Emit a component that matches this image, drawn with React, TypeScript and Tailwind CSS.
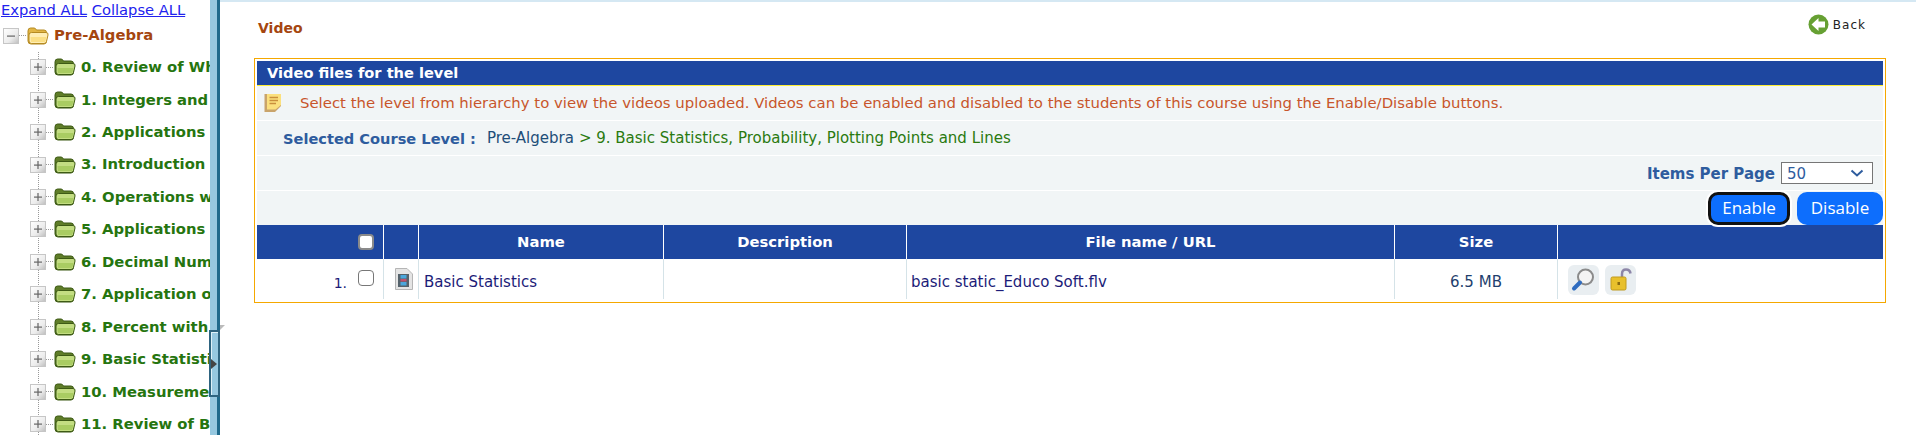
const font = "font-['DejaVu_Sans',Verdana,sans-serif]";

const levels = [
  "0. Review of Whole Numbers",
  "1. Integers and Introduction",
  "2. Applications of Integers",
  "3. Introduction to Fractions",
  "4. Operations with Fractions",
  "5. Applications of Fractions",
  "6. Decimal Numbers and More",
  "7. Application of Decimals",
  "8. Percent with Applications",
  "9. Basic Statistics, Probability",
  "10. Measurement and Geometry",
  "11. Review of Basic Algebra",
];

function BoxIcon({ minus }: { minus?: boolean }) {
  return (
    <svg width="16" height="16" viewBox="0 0 16 16" className="shrink-0">
      <defs>
        <linearGradient id="bx" x1="0" y1="0" x2="1" y2="1">
          <stop offset="0" stopColor="#ffffff" />
          <stop offset="0.6" stopColor="#ececec" />
          <stop offset="1" stopColor="#bdbdbd" />
        </linearGradient>
      </defs>
      <rect x="0.5" y="0.5" width="15" height="15" fill="url(#bx)" stroke="#c6c6c6" />
      <rect x="4" y="7.5" width="8" height="1.2" fill="#666" />
      {!minus && <rect x="7.4" y="4" width="1.2" height="8" fill="#666" />}
    </svg>
  );
}

function Folder({ open }: { open?: boolean }) {
  const back = open ? "#e2b645" : "#5f7d28";
  const fill = open ? "#fbdf85" : "#a9cc62";
  const front = open ? "#ffeeb4" : "#c3dd82";
  const edge = open ? "#b58a22" : "#3d5a14";
  return (
    <svg width="22" height="18" viewBox="0 0 22 18" className="shrink-0">
      <path d="M1 4 Q1 1 3.5 1 H7 Q8.5 1 9.5 3 H17 Q19.5 3 19.5 5.5 V14 Q19.5 17 17 17 H4 Q1 17 1 14 Z" fill={back} stroke={edge} />
      <path d="M2 8 Q2 5.5 4.5 5.5 H19 Q21.5 5.5 21 8 L19.5 14.5 Q19 16.5 17 16.5 H4.5 Q2 16.5 2 14 Z" fill={front} stroke={edge} strokeWidth="1" />
      <path d="M3.5 10 H19.5 L18.2 15 H4 Z" fill={fill} />
    </svg>
  );
}

function Back() {
  return (
    <svg width="21" height="21" viewBox="0 0 21 21" className="shrink-0">
      <circle cx="10.5" cy="10.5" r="10" fill="#66a033" />
      <path d="M3.5 10.5 L10.5 4 V7.5 H17 V13.5 H10.5 V17 Z" fill="#ffffff" />
    </svg>
  );
}

function Note() {
  return (
    <svg width="18" height="20" viewBox="0 0 18 20" className="shrink-0">
      <path d="M0.5 1 H17 V13 L11 19 H0.5 Z" fill="#c9a46b" />
      <path d="M3 1 H17 V12 L11.5 16.5 H3 Z" fill="#fbe07e" />
      <path d="M5.5 4.5 H14 M5.5 7.5 H14 M5.5 10.5 H12" stroke="#c98f3c" strokeWidth="1.3" />
    </svg>
  );
}

function VideoFile() {
  return (
    <svg width="18" height="22" viewBox="0 0 18 22">
      <path d="M0.5 0.5 H12 L17.5 6 V21.5 H0.5 Z" fill="#e4e4e4" stroke="#b5b5b5" />
      <rect x="3" y="6" width="11" height="13" fill="#55626b" />
      <rect x="5.5" y="7" width="6" height="3.5" fill="#4aa6dc" />
      <rect x="5.5" y="11" width="6" height="2.5" fill="#c0506e" />
      <rect x="5.5" y="14" width="6" height="3.5" fill="#4aa6dc" />
    </svg>
  );
}

function Search() {
  return (
    <span className="flex h-[30px] w-[31px] items-center justify-center rounded-md bg-[#e9eef1]">
      <svg width="25" height="25" viewBox="0 0 25 25">
        <circle cx="14.5" cy="10" r="7.5" fill="#f4f4f4" stroke="#8b8b8b" strokeWidth="2" />
        <path d="M9 15.5 L3 21.5" stroke="#2f6cc0" strokeWidth="4" strokeLinecap="round" />
      </svg>
    </span>
  );
}

function Lock() {
  return (
    <span className="flex h-[30px] w-[31px] items-center justify-center rounded-md bg-[#e9eef1]">
      <svg width="25" height="25" viewBox="0 0 25 25">
        <path d="M14 11 V7 Q14 2.5 18 2.5 Q22 2.5 22.5 6.5" fill="none" stroke="#8d86a8" strokeWidth="2.5" />
        <rect x="3" y="10" width="15" height="13" rx="1.5" fill="#e8c02c" stroke="#c09a1e" />
        <rect x="9.5" y="15" width="2.5" height="3" fill="#8a6a10" />
      </svg>
    </span>
  );
}

const hDots = "h-px w-[8px] shrink-0 bg-[repeating-linear-gradient(to_right,#999_0_1px,transparent_1px_2px)]";

function Tree() {
  return (
    <aside className="h-full w-[210px] shrink-0 overflow-hidden bg-white">
      <div className="h-5 whitespace-nowrap pl-[1px] text-[14.7px] leading-5">
        <a className="text-[#2222ee] underline">Expand ALL</a> <a className="text-[#2222ee] underline">Collapse ALL</a>
      </div>
      <div className="flex h-[30px] items-center pl-[3px] pt-[1px]">
        <BoxIcon minus />
        <span className={hDots} />
        <Folder open />
        <span className="ml-[5px] whitespace-nowrap text-[14.8px] font-bold text-[#a5460f]">Pre-Algebra</span>
      </div>
      <div className="relative pl-[30px] pt-[1px]">
        <span className="absolute left-[38px] top-[2px] bottom-[-30px] w-px bg-[repeating-linear-gradient(to_bottom,#999_0_1px,transparent_1px_2px)]" />
        {levels.map((l) => (
          <div key={l} className="relative flex h-[32.45px] items-center">
            <BoxIcon />
            <span className={hDots} />
            <Folder />
            <span className="ml-[5px] whitespace-nowrap text-[14.8px] font-bold text-[#26750f]">{l}</span>
          </div>
        ))}
      </div>
    </aside>
  );
}

function Splitter() {
  return (
    <div className="relative h-full w-[10px] shrink-0 border-r-[3px] border-[#1f6a8c] bg-[#96c8e0]">
      <div className="absolute left-[-1px] top-[330px] flex h-[67px] w-[11px] items-center border-2 border-[#2e6480] bg-[#96c8e0] shadow-[inset_1px_1px_0_#dff1f8]">
        <span className="h-0 w-0 border-y-[5px] border-l-[6px] border-y-transparent border-l-[#444]" />
      </div>
      <svg width="5" height="5" viewBox="0 0 5 5" className="absolute left-[10px] top-[325px]">
        <path d="M0 5 L5 0 H0 Z" fill="#bbbbbb" />
      </svg>
    </div>
  );
}

const cols = "grid grid-cols-[127px_35px_245px_243px_488px_163px_1fr]";

function Table() {
  const headCell = "flex items-center justify-center border-r border-white pt-[1px]";
  const bodyCell = "flex items-center border-r border-[#d5e3e8]";
  return (
    <div>
      <div className={`${cols} h-[34px] bg-[#1e47a0] text-[14.8px] font-bold text-white`}>
        <div className={`${headCell} justify-end pr-[9px]`}>
          <input type="checkbox" className="mb-[2px] h-[16px] w-[16px] appearance-none rounded-[4px] border-2 border-[#8a8a8a] bg-white" />
        </div>
        <div className={headCell} />
        <div className={headCell}>Name</div>
        <div className={headCell}>Description</div>
        <div className={headCell}>File name / URL</div>
        <div className={headCell}>Size</div>
        <div />
      </div>
      <div className={`${cols} h-[40px] text-[15px] text-[#1c1c78]`}>
        <div className={`${bodyCell} justify-end pr-[9px]`}>
          <span className="mr-[11px] mt-[8px] text-[14px]">1.</span>
          <input type="checkbox" className="mb-[2px] h-[16px] w-[16px] appearance-none rounded-[4px] border border-[#777] bg-white" />
        </div>
        <div className={`${bodyCell} justify-center pl-[6px]`}><VideoFile /></div>
        <div className={`${bodyCell} pl-[5px] pt-[6px]`}>Basic Statistics</div>
        <div className={bodyCell} />
        <div className={`${bodyCell} pl-[4px] pt-[6px]`}>basic static_Educo Soft.flv</div>
        <div className={`${bodyCell} justify-center pt-[6px] text-[#1f3f6e]`}>6.5 MB</div>
        <div className="flex items-center gap-[6px] pl-[10px] pt-[1px]"><Search /><Lock /></div>
      </div>
    </div>
  );
}

function PageSize() {
  return (
    <div className="relative ml-[6px]">
      <select className="block h-[22px] w-[92px] appearance-none border border-[#767676] bg-white pl-[5px] text-[15px] text-[#2e5c9e]">
        <option>50</option>
      </select>
      <svg width="14" height="8" viewBox="0 0 14 8" className="absolute right-[9px] top-[7px]">
        <path d="M1.5 1.5 L7 6.5 L12.5 1.5" fill="none" stroke="#2e5c9e" strokeWidth="2" />
      </svg>
    </div>
  );
}

function Panel() {
  return (
    <section className="mx-[30px] ml-[34px] h-[245px] border border-[#f5a800] p-[2px]">
      <div className="flex h-[25px] items-center border-b border-[#ffee33] bg-[#1e47a0] pl-[10px] text-[14.6px] font-bold text-white">
        Video files for the level
      </div>
      <div className="flex h-[35px] items-center border-b border-white bg-[#f1f5f6] pl-[7px] text-[14.9px] text-[#c8552b]">
        <Note />
        <span className="ml-[18px]">Select the level from hierarchy to view the videos uploaded. Videos can be enabled and disabled to the students of this course using the Enable/Disable buttons.</span>
      </div>
      <div className="flex h-[35px] items-center border-b border-white bg-[#f1f5f6] pl-[26px] pt-[1px] text-[15px]">
        <span className="text-[14.6px] font-bold text-[#2e5c9e]">Selected Course Level :</span>
        <span className="ml-[11px] text-[#1e4e79]">Pre-Algebra</span>
        <span className="ml-[5px] text-[#2a7a0f]">&gt; 9. Basic Statistics, Probability, Plotting Points and Lines</span>
      </div>
      <div className="flex h-[35px] items-center justify-end border-b border-white bg-[#f1f5f6] pr-[10px]">
        <span className="pt-[2px] text-[15px] font-bold text-[#2e5c9e]">Items Per Page</span>
        <PageSize />
      </div>
      <div className="flex h-[34px] items-center justify-end gap-[7px] bg-[#f1f5f6]">
        <button className="h-[33px] w-[82px] rounded-[10px] border-[3px] border-[#111] bg-[#0d6efd] font-['Open_Sans',sans-serif] text-[17px] text-white shadow-[0_0_0_2px_#fff]">Enable</button>
        <button className="h-[33px] w-[86px] rounded-[10px] bg-[#0d6efd] font-['Open_Sans',sans-serif] text-[17px] text-white">Disable</button>
      </div>
      <Table />
    </section>
  );
}

export default function App() {
  return (
    <div className={`${font} flex h-[435px] w-[1916px] overflow-hidden bg-white`}>
      <Tree />
      <Splitter />
      <main className="min-w-0 flex-1">
        <div className="h-[2px] bg-[#d5e8f3]" />
        <div className="flex h-[56px] items-start justify-between pl-[38px] pr-[50px]">
          <h1 className="mt-[16px] text-[14px] font-bold text-[#a5460f]">Video</h1>
          <div className="mt-[12px] flex items-center gap-[4px] text-[12px] tracking-[1px] text-[#222]"><Back /><span>Back</span></div>
        </div>
        <Panel />
      </main>
    </div>
  );
}
